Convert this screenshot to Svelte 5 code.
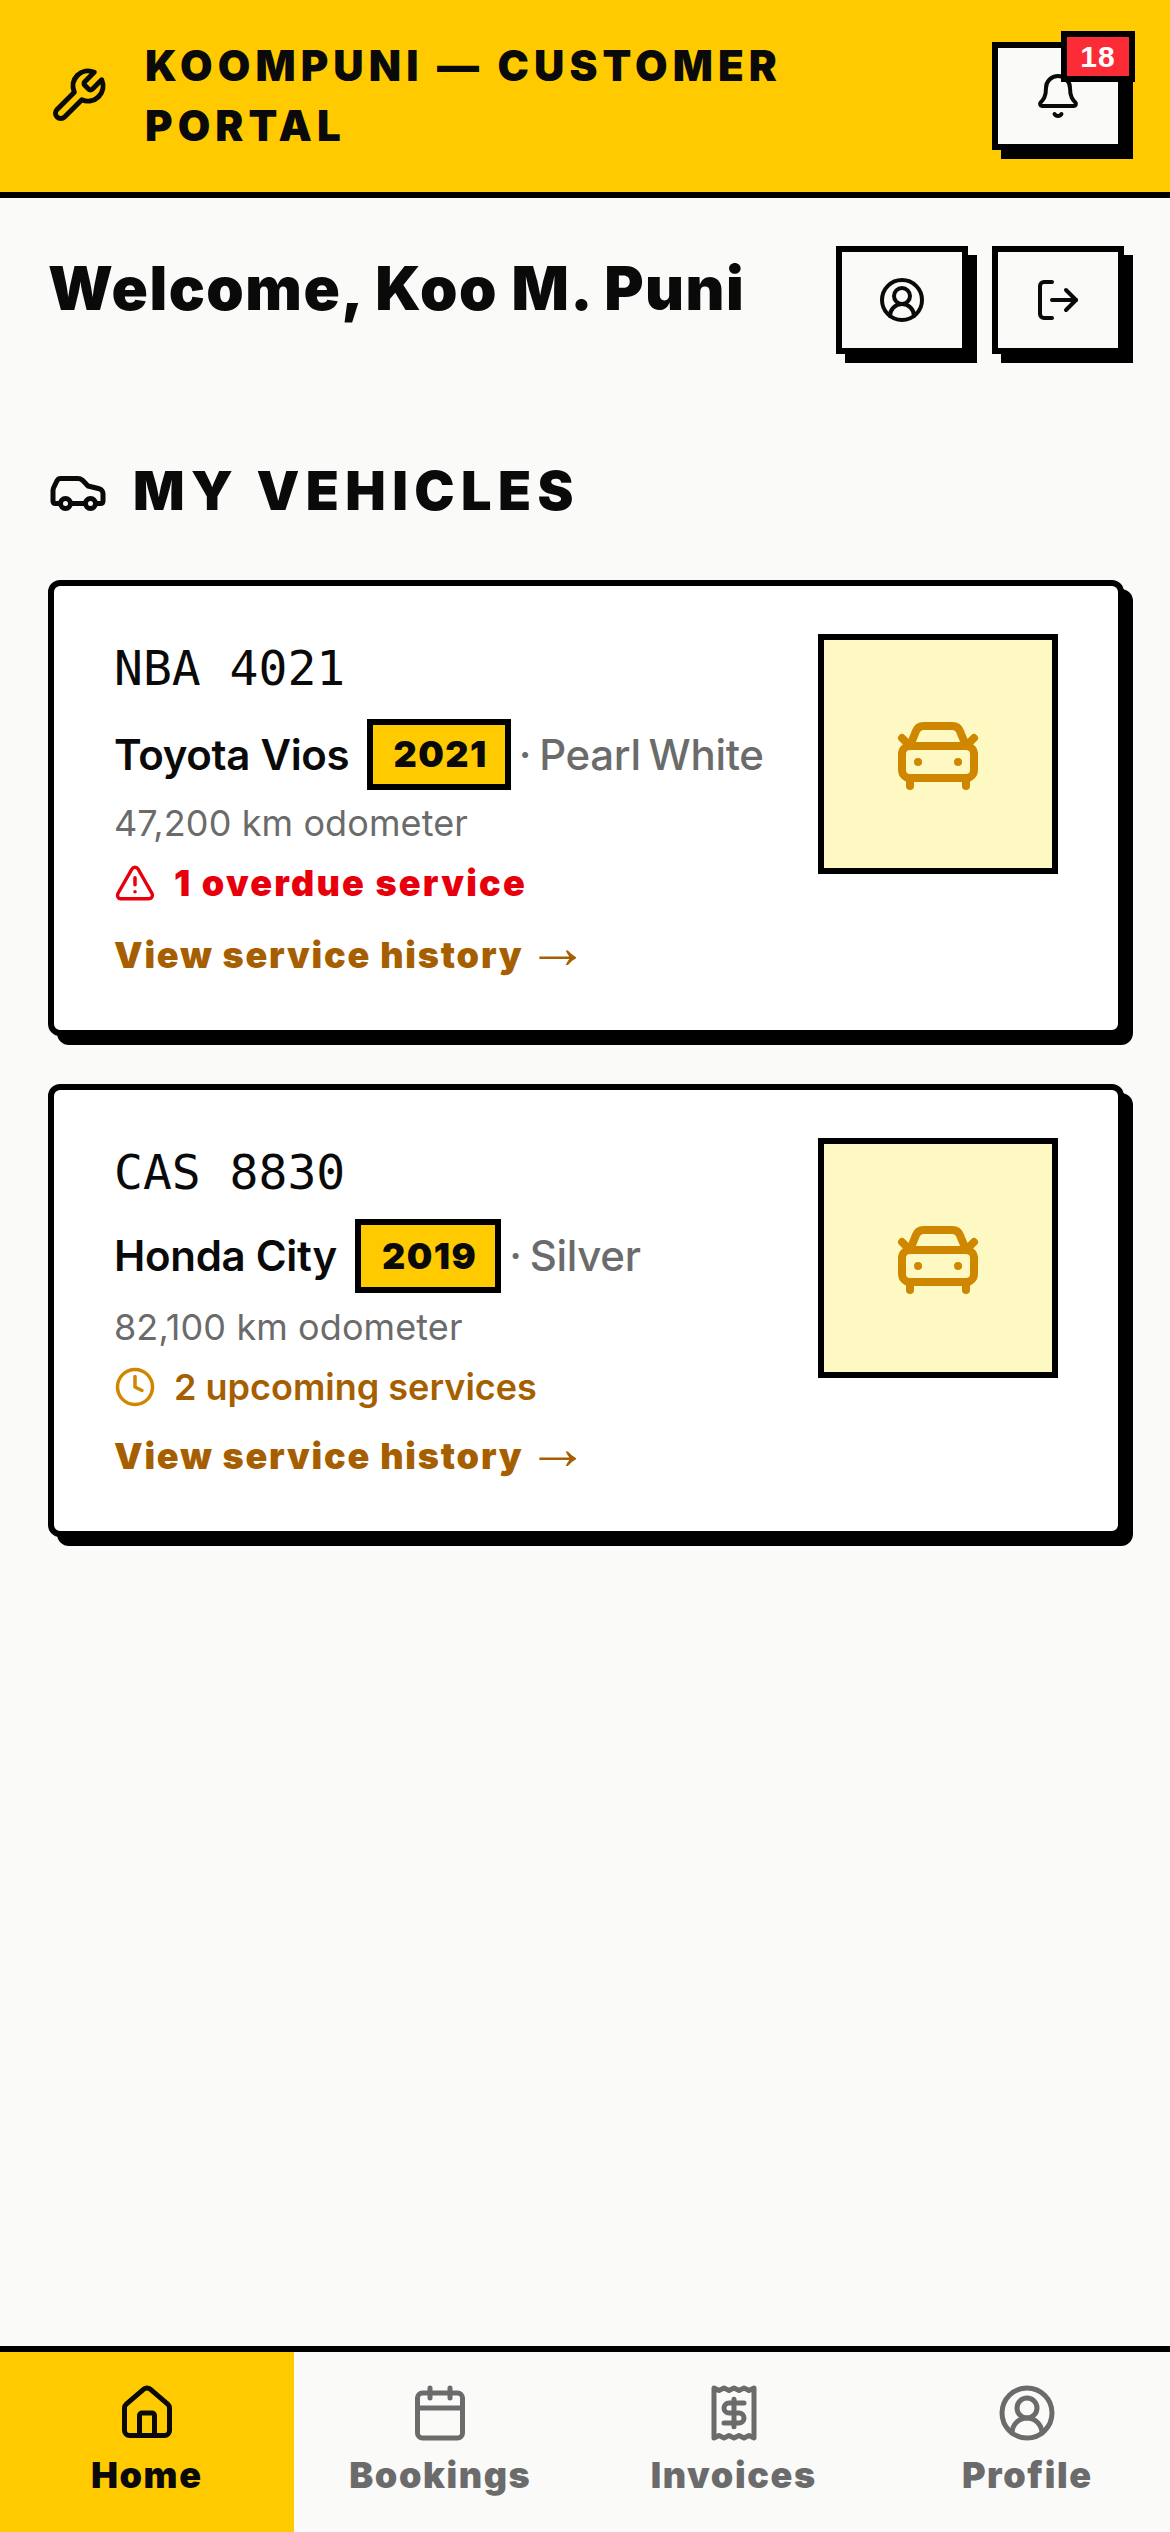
<script>
  const vehicles = [
    { plate: "NBA 4021", model: "Toyota Vios", year: "2021", color: "Pearl White", odo: "47,200 km odometer", status: "overdue", statusText: "1 overdue service" },
    { plate: "CAS 8830", model: "Honda City", year: "2019", color: "Silver", odo: "82,100 km odometer", status: "upcoming", statusText: "2 upcoming services" }
  ];
  const tabs = [
    { label: "Home", icon: "house", active: true },
    { label: "Bookings", icon: "calendar" },
    { label: "Invoices", icon: "receipt" },
    { label: "Profile", icon: "user" }
  ];
</script>

{#snippet userIcon(size, sw)}
  <svg class="ico" width={size} height={size} viewBox="0 0 24 24" stroke-width={sw}>
    <circle cx="12" cy="12" r="10" /><circle cx="12" cy="10" r="4" /><path d="M18 20a6 6 0 0 0-12 0" />
  </svg>
{/snippet}

<div class="page">
  <header class="topbar">
    <svg class="ico" width="60" height="60" viewBox="0 0 24 24" stroke-width="2">
      <path d="M14.7 6.3a1 1 0 0 0 0 1.4l1.6 1.6a1 1 0 0 0 1.4 0l3.77-3.77a6 6 0 0 1-7.94 7.94l-6.91 6.91a2.12 2.12 0 0 1-3-3l6.91-6.91a6 6 0 0 1 7.94-7.94l-3.76 3.76z" />
    </svg>
    <div class="brand">KOOMPUNI — CUSTOMER PORTAL</div>
    <button class="sq bell">
      <svg class="ico" width="48" height="48" viewBox="0 0 24 24" stroke-width="2">
        <path d="M10.268 21a2 2 0 0 0 3.464 0" />
        <path d="M3.262 15.326A1 1 0 0 0 4 17h16a1 1 0 0 0 .74-1.673C19.41 13.956 18 12.499 18 8A6 6 0 0 0 6 8c0 4.499-1.411 5.956-2.738 7.326" />
      </svg>
      <span class="badge">18</span>
    </button>
  </header>

  <main class="content">
    <div class="welcome">
      <h1>Welcome, Koo M. Puni</h1>
      <div class="actions">
        <button class="sq">{@render userIcon(48, 2)}</button>
        <button class="sq">
          <svg class="ico" width="48" height="48" viewBox="0 0 24 24" stroke-width="2">
            <path d="m16 17 5-5-5-5" /><path d="M21 12H9" /><path d="M9 21H5a2 2 0 0 1-2-2V5a2 2 0 0 1 2-2h4" />
          </svg>
        </button>
      </div>
    </div>

    <h2>
      <svg class="ico" width="60" height="60" viewBox="0 0 24 24" stroke-width="2">
        <path d="M19 17h2c.6 0 1-.4 1-1v-3c0-.9-.7-1.7-1.5-1.9C18.7 10.6 16 10 16 10s-1.3-1.4-2.2-2.3c-.5-.4-1.1-.7-1.8-.7H5c-.6 0-1.1.4-1.4.9l-1.4 2.9A3.7 3.7 0 0 0 2 12v4c0 .6.4 1 1 1h2" />
        <circle cx="7" cy="17" r="2" /><path d="M9 17h6" /><circle cx="17" cy="17" r="2" />
      </svg>
      MY VEHICLES
    </h2>

    <div class="cards">
      {#each vehicles as v}
        <article class="card {v.status}">
          <div class="info">
            <div class="plate">{v.plate}</div>
            <div class="model">
              <span class="name">{v.model}</span>
              <span class="year">{v.year}</span>
              <span class="paint">· {v.color}</span>
            </div>
            <div class="odo">{v.odo}</div>
            <div class="status">
              {#if v.status === "overdue"}
                <svg class="ico" width="42" height="42" viewBox="0 0 24 24" stroke-width="2">
                  <path d="m21.73 18-8-14a2 2 0 0 0-3.48 0l-8 14A2 2 0 0 0 4 21h16a2 2 0 0 0 1.73-3" /><path d="M12 9v4" /><path d="M12 17h.01" />
                </svg>
              {:else}
                <svg class="ico clock" width="42" height="42" viewBox="0 0 24 24" stroke-width="2">
                  <circle cx="12" cy="12" r="10" /><path d="M12 6v6l4 2" />
                </svg>
              {/if}
              <span>{v.statusText}</span>
            </div>
            <a class="history" href="#history">View service history <span class="arrow">→</span></a>
          </div>
          <div class="thumb">
            <svg class="ico" width="96" height="96" viewBox="0 0 24 24" stroke-width="2">
              <path d="m21 8-2 2-1.5-3.7A2 2 0 0 0 15.646 5H8.4a2 2 0 0 0-1.903 1.257L5 10 3 8" />
              <path d="M7 14h.01" /><path d="M17 14h.01" />
              <rect width="18" height="8" x="3" y="10" rx="2" />
              <path d="M5 18v2" /><path d="M19 18v2" />
            </svg>
          </div>
        </article>
      {/each}
    </div>
  </main>

  <nav class="tabs">
    {#each tabs as t}
      <a class="tab" class:active={t.active} href="#tab">
        {#if t.icon === "house"}
          <svg class="ico" width="60" height="60" viewBox="0 0 24 24" stroke-width="2">
            <path d="M15 21v-8a1 1 0 0 0-1-1h-4a1 1 0 0 0-1 1v8" />
            <path d="M3 10a2 2 0 0 1 .709-1.528l7-5.999a2 2 0 0 1 2.582 0l7 5.999A2 2 0 0 1 21 10v9a2 2 0 0 1-2 2H5a2 2 0 0 1-2-2z" />
          </svg>
        {:else if t.icon === "calendar"}
          <svg class="ico" width="60" height="60" viewBox="0 0 24 24" stroke-width="2">
            <path d="M8 2v4" /><path d="M16 2v4" /><rect width="18" height="18" x="3" y="4" rx="2" /><path d="M3 10h18" />
          </svg>
        {:else if t.icon === "receipt"}
          <svg class="ico" width="60" height="60" viewBox="0 0 24 24" stroke-width="2">
            <path d="M4 2v20l2-1 2 1 2-1 2 1 2-1 2 1 2-1 2 1V2l-2 1-2-1-2 1-2-1-2 1-2-1-2 1Z" />
            <path d="M16 8h-6a2 2 0 1 0 0 4h4a2 2 0 1 1 0 4H8" /><path d="M12 17.5v-11" />
          </svg>
        {:else}
          {@render userIcon(60, 2)}
        {/if}
        <span>{t.label}</span>
      </a>
    {/each}
  </nav>
</div>

<style>
  :global(body) {
    margin: 0;
    background: #fafaf8;
  }
  .page {
    display: flex;
    flex-direction: column;
    min-height: 2532px;
    overflow: hidden;
    color: #0a0a0a;
    font-family: Inter, sans-serif;
  }
  .ico {
    display: block;
    flex: none;
    fill: none;
    stroke: currentColor;
    stroke-linecap: round;
    stroke-linejoin: round;
  }

  .topbar {
    display: flex;
    align-items: center;
    box-sizing: border-box;
    height: 198px;
    padding: 0 46px 0 48px;
    background: #ffca00;
    border-bottom: 6px solid #000;
  }
  .brand {
    width: 700px;
    margin-left: 37px;
    margin-right: auto;
    font-size: 42px;
    font-weight: 900;
    line-height: 60px;
    letter-spacing: 5.1px;
  }
  .sq {
    position: relative;
    display: flex;
    align-items: center;
    justify-content: center;
    box-sizing: border-box;
    width: 132px;
    height: 108px;
    padding: 0;
    color: #0a0a0a;
    background: #fafaf8;
    border: 6px solid #000;
    box-shadow: 9px 9px 0 #000;
  }
  .badge {
    position: absolute;
    top: -17px;
    right: -17px;
    box-sizing: border-box;
    width: 74px;
    height: 51px;
    color: #fff;
    background: #fb2c36;
    border: 6px solid #000;
    font-size: 30px;
    font-weight: 900;
    line-height: 39px;
    letter-spacing: 1px;
    text-align: center;
  }

  .content {
    flex: 1;
    padding: 48px 46px 0 48px;
  }
  .welcome {
    display: flex;
    justify-content: space-between;
    align-items: flex-start;
  }
  h1 {
    margin: 0;
    font-size: 60px;
    font-weight: 900;
    line-height: 84px;
    letter-spacing: 1.5px;
    white-space: nowrap;
  }
  .actions {
    display: flex;
    gap: 24px;
  }
  h2 {
    display: flex;
    align-items: center;
    gap: 25px;
    margin: 96px 0 48px;
    font-size: 54px;
    font-weight: 900;
    line-height: 82px;
    letter-spacing: 6.4px;
  }

  .cards {
    display: flex;
    flex-direction: column;
    gap: 48px;
  }
  .card {
    display: flex;
    justify-content: space-between;
    align-items: flex-start;
    padding: 48px 60px;
    background: #fff;
    border: 6px solid #000;
    border-radius: 12px;
    box-shadow: 9px 9px 0 #000;
  }
  .plate {
    font-family: "DejaVu Sans Mono", monospace;
    font-size: 48px;
    line-height: 68px;
  }
  .model {
    display: flex;
    align-items: center;
    margin-top: 17px;
    font-size: 42px;
    font-weight: 600;
    letter-spacing: -0.3px;
    line-height: 71px;
    white-space: nowrap;
  }
  .year {
    box-sizing: border-box;
    margin-left: 18px;
    padding: 0 17px 0 20px;
    background: #ffca00;
    border: 6px solid #000;
    font-size: 36px;
    font-weight: 900;
    line-height: 59px;
    letter-spacing: 1.5px;
  }
  .paint {
    margin-left: 8px;
    color: #6b6b6b;
    font-weight: 500;
    word-spacing: -3px;
  }
  .odo {
    margin-top: 6px;
    color: #6b6b6b;
    font-size: 36px;
    line-height: 54px;
    letter-spacing: 0.1px;
  }
  .status {
    display: flex;
    align-items: center;
    gap: 18px;
    margin-top: 6px;
    font-size: 36px;
    line-height: 54px;
  }
  .overdue .status {
    color: #e7000b;
    font-weight: 900;
    letter-spacing: 2.2px;
  }
  .upcoming .status {
    color: #a65f00;
    font-weight: 600;
  }
  .upcoming .model {
    margin-top: 13px;
    line-height: 74px;
  }
  .upcoming .year {
    padding: 0 18px 0 21px;
    line-height: 62px;
  }
  .upcoming .odo {
    margin-top: 7px;
  }
  .upcoming .history {
    margin-top: 15px;
  }
  .clock {
    color: #d08700;
  }
  .history {
    display: block;
    margin-top: 18px;
    color: #a65f00;
    font-size: 36px;
    font-weight: 900;
    line-height: 54px;
    letter-spacing: 1.8px;
    text-decoration: none;
  }
  .arrow {
    margin-left: -6px;
    font-family: "Liberation Sans", sans-serif;
    font-size: 62px;
    font-weight: 400;
    line-height: 0;
    letter-spacing: 0;
  }
  .thumb {
    display: flex;
    align-items: center;
    justify-content: center;
    box-sizing: border-box;
    width: 240px;
    height: 240px;
    color: #d08700;
    background: #fef9c2;
    border: 6px solid #000;
  }

  .tabs {
    display: grid;
    grid-template-columns: repeat(4, 293.5px);
    height: 180px;
    border-top: 6px solid #000;
  }
  .tab {
    display: flex;
    flex-direction: column;
    align-items: center;
    gap: 5px;
    padding-top: 31px;
    color: #6b6b6b;
    font-size: 36px;
    font-weight: 900;
    line-height: 54px;
    letter-spacing: 1.6px;
    text-decoration: none;
  }
  .tab.active {
    color: #0a0a0a;
    background: #ffca00;
  }
</style>
